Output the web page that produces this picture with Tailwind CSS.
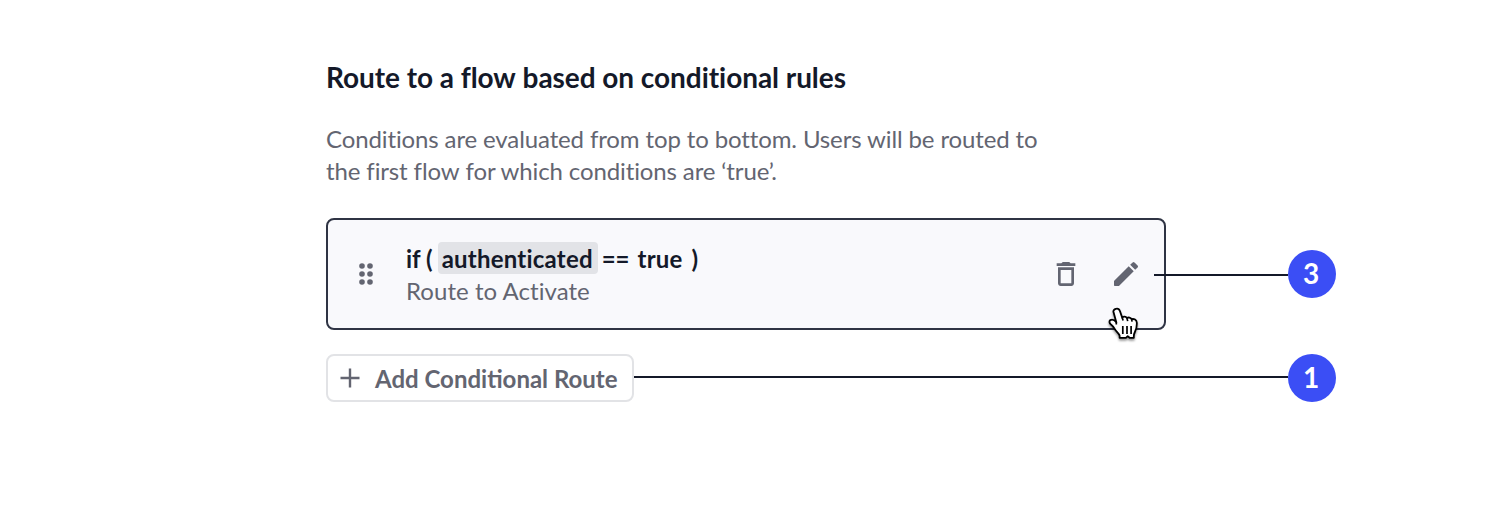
<!DOCTYPE html>
<html lang="en">
<head>
<meta charset="utf-8">
<title>Conditional routes</title>
<script src="https://cdn.jsdelivr.net/npm/@tailwindcss/browser@4"></script>
</head>
<body class="h-[520px] overflow-hidden bg-white font-['Lato',sans-serif] text-2xl leading-8 text-[#636571]">
<main class="w-[1336px] pt-[61px] pl-[326px]">
  <h1 class="text-[28px] leading-8 font-bold tracking-[-0.05px] whitespace-nowrap text-[#141929] [font-variant-ligatures:none]">Route to a <span class="[font-variant-ligatures:common-ligatures]">flow</span> based on conditional rules</h1>
  <p class="mt-[30px] tracking-[-0.12px] whitespace-nowrap [font-variant-ligatures:none]">Conditions are evaluated from top to bottom. Users will be routed to<br>the <span class="[font-variant-ligatures:common-ligatures]">first flow</span> for which conditions are ‘true’.</p>

  <div class="mt-[31px] flex items-center">
    <section class="relative flex h-28 w-[840px] shrink-0 items-center rounded-lg border-2 border-[#2f3444] bg-[#f9f9fc] pr-[22px] pl-[30px]">
      <svg class="mr-[32px] h-6 w-4" viewBox="0 0 16 24" fill="#636571">
        <circle cx="4" cy="4" r="2.8"/><circle cx="12" cy="4" r="2.8"/>
        <circle cx="4" cy="12" r="2.8"/><circle cx="12" cy="12" r="2.8"/>
        <circle cx="4" cy="20" r="2.8"/><circle cx="12" cy="20" r="2.8"/>
      </svg>
      <div class="flex-1 [font-variant-ligatures:none]">
        <div class="flex h-8 whitespace-pre font-bold text-[#141929] leading-[34px]"><span>if (</span><span class="ml-[5px] h-8 w-[160px] rounded bg-[#e2e3e7] px-1 tracking-[0.22px]">authenticated</span><span class="ml-1">==</span><span class="ml-2 tracking-[0.2px]">true</span><span class="ml-[9px]">)</span></div>
        <div class="h-8 leading-[34px] tracking-[0.05px]">Route to Activate</div>
      </div>
      <svg class="h-8 w-8" viewBox="0 0 24 24" fill="#636571"><path d="M6 19c0 1.100.9 2 2 2h8c1.100 0 2-.9 2-2V7H6v12zM8 9h8v10H8V9zm7.500-5-.7-.7c-.2-.2-.45-.3-.7-.3H9.900c-.25 0-.5.1-.7.3L8.500 4H5v2h14V4h-3.500z"/></svg>
      <svg class="ml-7 h-8 w-8" viewBox="0 0 24 24" fill="#636571"><path d="M3 17.460v3.040c0 .28.22.5.5.5h3.040c.13 0 .26-.05.35-.15L17.810 9.940l-3.750-3.750L3.150 17.100c-.1.1-.15.22-.15.36zM20.710 7.040a1 1 0 0 0 0-1.410l-2.340-2.340a1 1 0 0 0-1.410 0l-1.830 1.830 3.750 3.750 1.830-1.830z"/></svg>
      <svg class="absolute top-[85px] left-[777px] h-[40px] w-[36px] overflow-visible drop-shadow-[0_2px_1px_rgba(0,0,0,0.4)]" viewBox="0 0 36 40">
        <path d="M10.800 3.900c1.900-.6 3.500.4 4.200 2.300l2.200 6.400c1.300-1.300 3.600-1.200 4.700.5 1.500-1 3.800-.7 4.700 1.100 2.400-.7 5 .6 5.200 3.300.2 3.400-.5 6.700-1.900 9.500-.7 1.400-1.100 2.500-1.100 4.200v1.600h-4.200l-1.900-1.600-1.800 1.600h-6.300v-2.200c-.8-2-2.700-3.500-4-5.300-1.400-2-2.400-4.100-4.900-6-1.500-1.300-1.700-3.200-.3-4.200 1.900-1.100 4.100.1 5.900 2.100L8.500 7.100c-.5-1.500.7-2.700 2.300-3.200z" fill="#fff" stroke="#000" stroke-width="1.800" stroke-linejoin="round"/>
        <path d="M11.300 17v2.500M17.200 12.600l.9 3M21.900 13.100l.8 3M26.600 14.200l.5 2.500M17.800 21v8M22 21v8M26.100 21v8" fill="none" stroke="#000" stroke-width="1.700"/>
      </svg>
    </section>
    <div class="relative mt-[2px] -ml-3 h-0.5 flex-1 bg-[#141929]"></div>
    <div class="h-12 w-12 rounded-full bg-[#3b4ef5] pr-0.5 text-center text-[28px] leading-[47px] font-bold text-white">3</div>
  </div>

  <div class="mt-6 flex items-center">
    <button class="flex h-12 w-[308px] shrink-0 items-center rounded-lg border-2 border-[#e2e3e6] bg-white pl-3 font-bold whitespace-nowrap">
      <svg class="mr-[15px] h-5 w-5" viewBox="0 0 20 20" fill="none" stroke="#636571" stroke-width="2.400"><path d="M.5 10h19M10 .5v19"/></svg>
      <span class="pt-0.5">Add Conditional Route</span>
    </button>
    <div class="-mt-[2px] h-0.5 flex-1 bg-[#141929]"></div>
    <div class="h-12 w-12 rounded-full bg-[#3b4ef5] pr-0.5 text-center text-[28px] leading-[47px] font-bold text-white">1</div>
  </div>
</main>
</body>
</html>
